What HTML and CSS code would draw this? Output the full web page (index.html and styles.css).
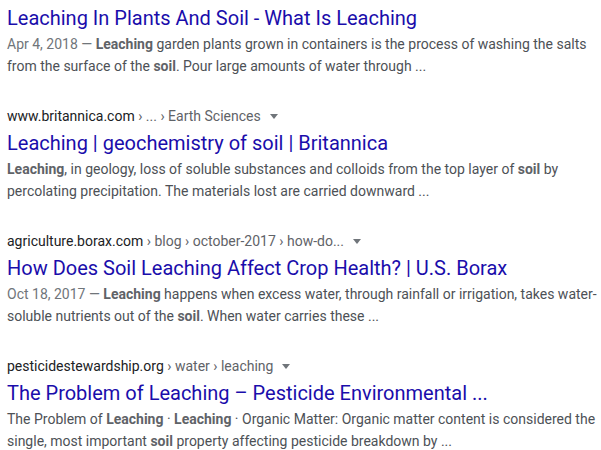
FILE: index.html
```html
<!DOCTYPE html>
<html>
<head>
<meta charset="utf-8">
<link rel="stylesheet" href="styles.css">
</head>
<body>
<div class="results">
  <div class="result first">
    <a class="title">Leaching In Plants And Soil - What Is Leaching</a>
    <div class="snippet"><span class="date">Apr 4, 2018 — </span><b>Leaching</b> garden plants grown in containers is the process of washing the salts from the surface of the <b>soil</b>. Pour large amounts of water through ...</div>
  </div>
  <div class="result">
    <div class="url"><span class="domain">www.britannica.com</span><span class="crumb"> › ... › Earth Sciences</span><span class="arrow"></span></div>
    <a class="title">Leaching | geochemistry of soil | Britannica</a>
    <div class="snippet"><b>Leaching</b>, in geology, loss of soluble substances and colloids from the top layer of <b>soil</b> by percolating precipitation. The materials lost are carried downward ...</div>
  </div>
  <div class="result">
    <div class="url"><span class="domain">agriculture.borax.com</span><span class="crumb"> › blog › october-2017 › how-do...</span><span class="arrow"></span></div>
    <a class="title">How Does Soil Leaching Affect Crop Health? | U.S. Borax</a>
    <div class="snippet"><span class="date">Oct 18, 2017 — </span><b>Leaching</b> happens when excess water, through rainfall or irrigation, takes water-soluble nutrients out of the <b>soil</b>. When water carries these ...</div>
  </div>
  <div class="result">
    <div class="url"><span class="domain">pesticidestewardship.org</span><span class="crumb"> › water › leaching</span><span class="arrow"></span></div>
    <a class="title">The Problem of Leaching – Pesticide Environmental ...</a>
    <div class="snippet">The Problem of <b>Leaching</b> · <b>Leaching</b> · Organic Matter: Organic matter content is considered the single, most important <b>soil</b> property affecting pesticide breakdown by ...</div>
  </div>
</div>
</body>
</html>
```

FILE: styles.css
```css
html, body {
  margin: 0;
  padding: 0;
  background: #ffffff;
}
body {
  font-family: Roboto, "Liberation Sans", Arial, sans-serif;
  width: 601px;
  height: 450px;
  overflow: hidden;
}
.results {
  padding: 5px 0 0 7px;
  width: 592px;
  display: flex;
  flex-direction: column;
  gap: 28px;
}
.result {
  display: flex;
  flex-direction: column;
}
.result + .result {
  margin-top: 1px;
}
.url {
  font-size: 14px;
  line-height: 20px;
  height: 20px;
  display: flex;
  align-items: center;
  white-space: pre;
  margin-bottom: 4px;
}
.domain {
  color: #202124;
}
.crumb {
  color: #5f6368;
}
.arrow {
  display: inline-block;
  width: 0;
  height: 0;
  margin-left: 9px;
  margin-top: 1px;
  border-style: solid;
  border-width: 5px 4px 0 4px;
  border-color: #70757a transparent transparent transparent;
}
.title {
  font-size: 20px;
  line-height: 26px;
  color: #1a0dab;
  text-decoration: none;
  white-space: nowrap;
}
.snippet {
  margin-top: 2px;
  font-size: 14px;
  line-height: 22px;
  color: #4d5156;
}
.snippet b {
  font-weight: 700;
  color: #5f6368;
}
.date {
  color: #70757a;
}
```
